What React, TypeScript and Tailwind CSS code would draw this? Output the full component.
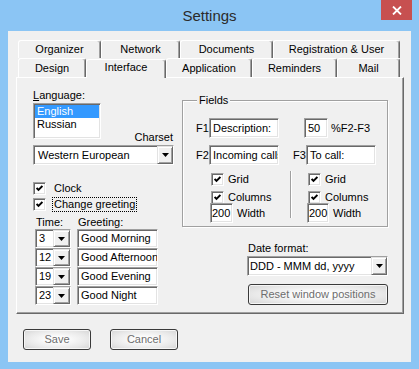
import React from "react";

// classic Win32 bevels
const sunken =
  "border border-t-[#a0a0a0] border-l-[#a0a0a0] border-r-white border-b-white shadow-[inset_1px_1px_0_#696969,inset_-1px_-1px_0_#e3e3e3]";
const raised =
  "border border-t-[#e3e3e3] border-l-[#e3e3e3] border-r-[#696969] border-b-[#696969] shadow-[inset_1px_1px_0_#ffffff,inset_-1px_-1px_0_#a0a0a0]";
const push =
  "rounded-[3px] border border-[#3a3a3a] bg-[radial-gradient(ellipse_at_center,#ffffff_15%,#e9e9e9_65%,#d4d4d4_100%)] text-[#6d6d6d] flex items-center justify-center shadow-[inset_0_0_0_1px_#f6f6f6]";
const tab =
  "h-full flex items-center justify-center bg-[#f0f0f0] border-t border-l border-r border-t-white border-l-white border-r-[#696969] rounded-t-[3px] shadow-[inset_-1px_0_0_#a0a0a0]";

const backTabs = [
  { label: "Organizer", w: "w-[83px]" },
  { label: "Network", w: "w-[79px]" },
  { label: "Documents", w: "w-[93px]" },
  { label: "Registration & User", w: "w-[127px]" },
];

const frontTabs = [
  { label: "Design", w: "w-[68px]" },
  { label: "Interface", w: "w-[80px]", active: true },
  { label: "Application", w: "w-[86px]" },
  { label: "Reminders", w: "w-[85px]" },
  { label: "Mail", w: "w-[63px]" },
];

const greetings = [
  { t: "3", g: "Good Morning" },
  { t: "12", g: "Good Afternoon" },
  { t: "19", g: "Good Evening" },
  { t: "23", g: "Good Night" },
];

function Arrow() {
  return (
    <svg width="7" height="4" viewBox="0 0 7 4">
      <path d="M0 0h7L3.5 4z" fill="#000" />
    </svg>
  );
}

function DropBtn({ w }: { w: string }) {
  return (
    <div className={`${raised} ${w} h-full bg-[#f0f0f0] flex items-center justify-center shrink-0`}>
      <Arrow />
    </div>
  );
}

function Check() {
  return (
    <span className={`${sunken} w-[13px] h-[13px] bg-white flex items-center justify-center shrink-0`}>
      <svg width="7" height="7" viewBox="0 0 7 7">
        <polyline points="0.6,3 2.5,5 6.4,1" fill="none" stroke="#000" strokeWidth="1.9" />
      </svg>
    </span>
  );
}

function Field({ text, className }: { text: string; className: string }) {
  return (
    <div
      className={`${sunken} ${className} h-full bg-white overflow-hidden whitespace-nowrap leading-[18px] shrink-0`}
    >
      {text}
    </div>
  );
}

function CheckRow({ label, className = "" }: { label: string; className?: string }) {
  return (
    <div className={`flex items-center h-[13px] ${className}`}>
      <Check />
      <span className="ml-[4px]">{label}</span>
    </div>
  );
}

export default function App() {
  return (
    <div className="w-[419px] h-[369px] bg-[#8bc5f4] flex flex-col font-['Liberation_Sans',Arial,sans-serif] text-[11px] leading-[13px] text-black">
      {/* title bar */}
      <div className="relative h-[31px] flex items-center justify-center">
        <span className="text-[15px] leading-[17px] text-[#2b2b2b] mt-[-1px]">Settings</span>
        <div className="absolute top-0 right-[7px] w-[31px] h-[20px] bg-[#c75050] flex items-center justify-center">
          <svg width="10" height="9" viewBox="0 0 10 9">
            <path d="M1 0.5L9 8.5M9 0.5L1 8.5" stroke="#fff" strokeWidth="1.8" />
          </svg>
        </div>
      </div>

      {/* client */}
      <div className="mx-[8px] h-[331px] bg-[#f0f0f0] flex flex-col">
        {/* tabs */}
        <div className="ml-[10px] mt-[9px] w-[382px]">
          <div className="flex h-[18px]">
            {backTabs.map((t) => (
              <div key={t.label} className={`${tab} ${t.w}`}>
                {t.label}
              </div>
            ))}
          </div>
          <div className="flex h-[19px] items-end">
            {frontTabs.map((t) =>
              t.active ? (
                <div key={t.label} className={`${tab} ${t.w} h-[22px] mb-[-1px] relative z-10 pb-[3px]`}>
                  {t.label}
                </div>
              ) : (
                <div key={t.label} className={`${tab} ${t.w}`}>
                  {t.label}
                </div>
              )
            )}
          </div>
        </div>

        {/* panel */}
        <div className="ml-[8px] w-[388px] h-[237px] border border-t-white border-l-white border-r-[#696969] border-b-[#696969] shadow-[inset_-1px_-1px_0_#a0a0a0] flex gap-[8px] pl-[16px]">
          {/* left column */}
          <div className="w-[141px] pt-[11px] flex flex-col">
            <div className="h-[13px]">
              <span className="underline">L</span>anguage:
            </div>
            <div className="mt-px flex justify-between items-end">
              <div className={`${sunken} w-[68px] h-[36px] bg-white p-px`}>
                <div className="bg-[#3399ff] text-white h-[13px] pl-[2px]">English</div>
                <div className="h-[13px] pl-[2px]">Russian</div>
              </div>
              <span className="mb-[-5px] mr-px">Charset</span>
            </div>
            <div className={`${sunken} mt-[6px] h-[20px] w-[141px] bg-white flex`}>
              <span className="flex-1 pl-[4px] leading-[18px]">Western European</span>
              <DropBtn w="w-[16px]" />
            </div>

            <div className="mt-[17px] flex items-center h-[13px]">
              <Check />
              <span className="ml-[6px] px-px border border-transparent">Clock</span>
            </div>
            <div className="mt-[3px] flex items-center h-[13px]">
              <Check />
              <span className="ml-[6px] px-px border border-dotted border-black">Change greeting</span>
            </div>

            <div className="mt-[5px] h-[13px] flex">
              <span className="ml-[3px] w-[42px]">Time:</span>
              <span>Greeting:</span>
            </div>
            <div className="flex flex-col">
              {greetings.map((r) => (
                <div key={r.t} className="flex h-[19px]">
                  <div className={`${sunken} ml-[2px] w-[36px] h-full bg-white flex`}>
                    <span className="flex-1 pl-[3px] leading-[17px]">{r.t}</span>
                    <DropBtn w="w-[17px]" />
                  </div>
                  <div className={`${sunken} ml-[6px] w-[81px] h-full bg-white pl-[3px] leading-[17px] whitespace-nowrap overflow-hidden`}>
                    {r.g}
                  </div>
                </div>
              ))}
            </div>
          </div>

          {/* right column */}
          <div className="w-[206px] pt-[16px] flex flex-col">
            <fieldset className="w-[206px] border border-[#a0a0a0] shadow-[inset_1px_1px_0_#ffffff,1px_1px_0_#ffffff] pb-[3px]">
              <legend className="ml-[14px] px-[2px] bg-[#f0f0f0] leading-[13px]">Fields</legend>

              <div className="mt-[11px] flex items-center h-[20px]">
                <span className="ml-[13px] w-[13px]">F1</span>
                <Field text="Description:" className="w-[70px] pl-[3px]" />
                <Field text="50" className="ml-[25px] w-[24px] pl-[3px]" />
                <span className="ml-[3px]">%F2-F3</span>
              </div>

              <div className="mt-[7px] flex items-center h-[20px]">
                <span className="ml-[13px] w-[13px]">F2</span>
                <Field text="Incoming calls" className="w-[70px] pl-[3px]" />
                <span className="ml-[14px] w-[13px]">F3</span>
                <Field text="To call:" className="w-[70px] pl-[3px]" />
              </div>

              <div className="mt-[6px] flex">
                <div className="w-[107px] pl-[28px] pt-[2px] flex flex-col">
                  <CheckRow label="Grid" />
                  <CheckRow label="Columns" className="mt-[5px]" />
                  <div className="mt-[-1px] ml-[-1px] flex items-center h-[20px]">
                    <Field text="200" className="w-[23px] pl-px" />
                    <span className="ml-[4px]">Width</span>
                  </div>
                </div>
                <div className="w-px h-[47px] bg-[#a0a0a0] shadow-[1px_0_0_#ffffff]" />
                <div className="pl-[17px] pt-[2px] flex flex-col">
                  <CheckRow label="Grid" />
                  <CheckRow label="Columns" className="mt-[5px]" />
                  <div className="mt-[-1px] ml-[-1px] flex items-center h-[20px]">
                    <Field text="200" className="w-[22px] pl-px" />
                    <span className="ml-[4px]">Width</span>
                  </div>
                </div>
              </div>
            </fieldset>

            <div className="mt-[15px] ml-[66px] h-[13px]">Date format:</div>
            <div className={`${sunken} mt-[1px] ml-[65px] w-[141px] h-[20px] bg-white flex`}>
              <span className="flex-1 pl-[2px] leading-[18px]">DDD - MMM dd, yyyy</span>
              <DropBtn w="w-[16px]" />
            </div>
            <div className={`${push} mt-[8px] ml-[66px] w-[140px] h-[21px]`}>Reset window positions</div>
          </div>
        </div>

        {/* dialog buttons */}
        <div className="flex gap-[19px] ml-[15px] mt-[15px]">
          <div className={`${push} w-[68px] h-[21px]`}>Save</div>
          <div className={`${push} w-[68px] h-[21px]`}>Cancel</div>
        </div>
      </div>
    </div>
  );
}
